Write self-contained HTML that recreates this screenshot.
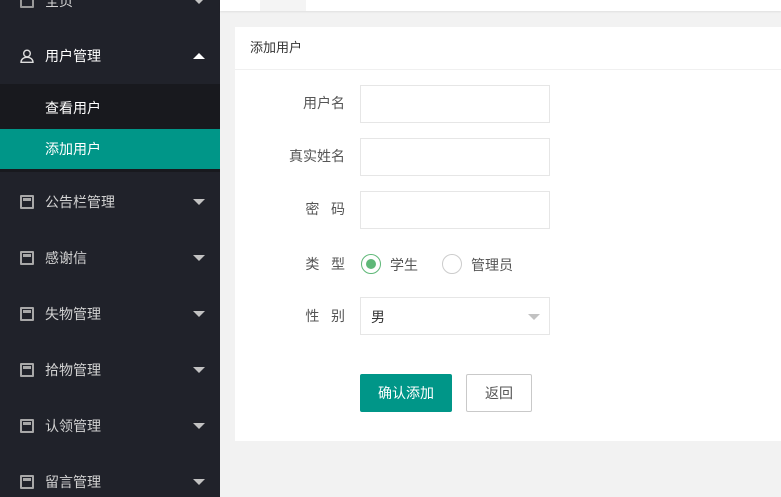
<!DOCTYPE html>
<html><head><meta charset="utf-8"><style>
*{margin:0;padding:0;box-sizing:border-box}
html,body{width:781px;height:497px;overflow:hidden}
body{background:#f2f2f2;font-family:"Liberation Sans","Noto Sans CJK SC",sans-serif;font-size:14px;position:relative}
.side{position:absolute;left:0;top:0;width:220px;height:497px;background:#20222a}
.item{position:absolute;left:0;width:220px;height:56px;color:#d2d2d2;}
.item .t{position:absolute;left:45px;top:50%;transform:translateY(-50%);line-height:20px}
.item .ic{position:absolute;left:20px;top:50%;margin-top:-7px;width:14px;height:14px;border:2px solid #a8a8a8;border-radius:1px}
.item .ic:before{content:"";position:absolute;left:1px;right:1px;top:1px;height:3px;background:#a8a8a8}
.arr{position:absolute;right:15px;top:50%;margin-top:-3px;border-left:6px solid transparent;border-right:6px solid transparent;border-top:6px solid #c2c2c2}
.up{border-top:none;border-bottom:6px solid #fff}
.sub{position:absolute;left:0;top:84px;width:220px;height:88px;background:#18191e}
.sub div{position:absolute;left:0;width:220px;height:40px;line-height:40px;padding-left:45px;color:#fff}
.top{position:absolute;left:220px;top:0;width:561px;height:11px;background:#fff;box-shadow:0 1px 2px rgba(0,0,0,.08)}
.card{position:absolute;left:235px;top:27px;width:546px;height:414px;background:#fff}
.ch{height:43px;line-height:42px;border-bottom:1px solid #f0f0f0;padding-left:15px;color:#333;font-size:13px}
.lab{position:absolute;width:110px;text-align:right;color:#555;font-size:14px;left:0}
.inp{position:absolute;left:125px;width:190px;height:38px;border:1px solid #e6e6e6;background:#fff}
.btn{position:absolute;top:347px;height:38px;line-height:36px;text-align:center;font-size:14px;border-radius:2px}
</style></head><body>
<div class="side">
 <div class="item" style="top:-27px"><span class="ic" style="border-color:#999"></span><span class="t">全页</span><span class="arr"></span></div>
 <div class="item" style="top:28px;color:#fff"><svg style="position:absolute;left:20px;top:21px" width="14" height="14" viewBox="0 0 14 14" fill="none" stroke="#ddd" stroke-width="1.4"><circle cx="7" cy="4.5" r="3.3"/><path d="M1 13.3c0-3 2.5-5 6-5s6 2 6 5z"/></svg><span class="t">用户管理</span><span class="arr up"></span></div>
 <div class="sub"><div style="top:4px">查看用户</div><div style="top:45px;background:#009688">添加用户</div></div>
 <div class="item" style="top:174px"><span class="ic"></span><span class="t">公告栏管理</span><span class="arr"></span></div>
 <div class="item" style="top:230px"><span class="ic"></span><span class="t">感谢信</span><span class="arr"></span></div>
 <div class="item" style="top:286px"><span class="ic"></span><span class="t">失物管理</span><span class="arr"></span></div>
 <div class="item" style="top:342px"><span class="ic"></span><span class="t">拾物管理</span><span class="arr"></span></div>
 <div class="item" style="top:398px"><span class="ic"></span><span class="t">认领管理</span><span class="arr"></span></div>
 <div class="item" style="top:454px"><span class="ic"></span><span class="t">留言管理</span><span class="arr"></span></div>
</div>
<div class="top"><div style="position:absolute;left:40px;top:0;width:46px;height:11px;background:#f4f4f4"></div></div>
<div class="card">
 <div class="ch">添加用户</div>
 <div class="lab" style="top:66px">用户名</div><div class="inp" style="top:58px"></div>
 <div class="lab" style="top:119px">真实姓名</div><div class="inp" style="top:111px"></div>
 <div class="lab" style="top:172px">密&nbsp;&nbsp;&nbsp;码</div><div class="inp" style="top:164px"></div>
 <div class="lab" style="top:227px">类&nbsp;&nbsp;&nbsp;型</div>
 <div style="position:absolute;left:126px;top:227px;width:20px;height:20px;border:1px solid #5fb878;border-radius:50%"><div style="position:absolute;left:4px;top:4px;width:10px;height:10px;border-radius:50%;background:#5fb878"></div></div>
 <span style="position:absolute;left:155px;top:228px;color:#555">学生</span>
 <div style="position:absolute;left:207px;top:227px;width:20px;height:20px;border:1px solid #ccc;border-radius:50%"></div>
 <span style="position:absolute;left:236px;top:228px;color:#555">管理员</span>
 <div class="lab" style="top:279px">性&nbsp;&nbsp;&nbsp;别</div>
 <div class="inp" style="top:270px"><span style="position:absolute;left:10px;top:9px;color:#333">男</span><span style="position:absolute;right:9px;top:16px;border-left:6px solid transparent;border-right:6px solid transparent;border-top:6px solid #c2c2c2"></span></div>
 <div class="btn" style="left:125px;width:92px;background:#009688;color:#fff;border:1px solid #009688">确认添加</div>
 <div class="btn" style="left:231px;width:66px;background:#fff;color:#555;border:1px solid #c9c9c9">返回</div>
</div>
</body></html>
